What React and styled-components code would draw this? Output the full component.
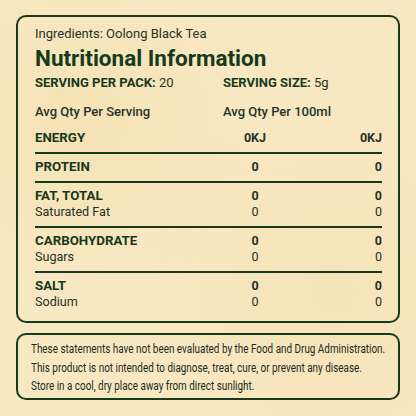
import styled, { createGlobalStyle } from "styled-components";

const GlobalStyle = createGlobalStyle`
  * { box-sizing: border-box; margin: 0; padding: 0; }
  body {
    margin: 0;
    background: #f8e8c2;
    font-family: Roboto, "Liberation Sans", sans-serif;
    color: #1c2a1d;
  }
`;

const GREEN = "#163a1c";

const rows = [
  { label: "ENERGY", per: "0KJ", per100: "0KJ" },
  { label: "PROTEIN", per: "0", per100: "0" },
  { label: "FAT, TOTAL", per: "0", per100: "0", sub: "Saturated Fat" },
  { label: "CARBOHYDRATE", per: "0", per100: "0", sub: "Sugars" },
  { label: "SALT", per: "0", per100: "0", sub: "Sodium" },
];

const notes = [
  "These statements have not been evaluated by the Food and Drug Administration.",
  "This product is not intended to diagnose, treat, cure, or prevent any disease.",
  "Store in a cool, dry place away from direct sunlight.",
];

const App = () => {
  return (
    <Page>
      <GlobalStyle />
      <Panel>
        <Ingredients>Ingredients: Oolong Black Tea</Ingredients>
        <Title>Nutritional Information</Title>
        <ServingRow>
          <Strong>
            SERVING PER PACK: <span>20</span>
          </Strong>
          <Wide>
            <Strong>
              SERVING SIZE: <span>5g</span>
            </Strong>
          </Wide>
        </ServingRow>
        <HeadRow>
          <Medium>Avg Qty Per Serving</Medium>
          <Wide>
            <Medium>Avg Qty Per 100ml</Medium>
          </Wide>
        </HeadRow>
        {rows.map((r, i) => (
          <Section key={r.label} $last={i === rows.length - 1}>
            <Label>{r.label}</Label>
            <Value>{r.per}</Value>
            <Value $right>{r.per100}</Value>
            {r.sub && (
              <>
                <Sub>{r.sub}</Sub>
                <SubValue>0</SubValue>
                <SubValue $right>0</SubValue>
              </>
            )}
          </Section>
        ))}
      </Panel>
      <Notice>
        {notes.map((n) => (
          <NoteLine key={n}>
            <span>{n}</span>
          </NoteLine>
        ))}
      </Notice>
    </Page>
  );
};

export default App;

const Page = styled.div`
  width: 416px;
  height: 416px;
  overflow: hidden;
  padding: 15px 16px 0;
  display: flex;
  flex-direction: column;
  gap: 10px;
  background:
    radial-gradient(circle at 20% 30%, rgba(240, 214, 160, 0.35), transparent 40%),
    radial-gradient(circle at 80% 70%, rgba(240, 214, 160, 0.3), transparent 45%),
    #f8e8c2;
`;

const Panel = styled.section`
  border: 2px solid ${GREEN};
  border-radius: 10px;
  height: 308px;
  flex-shrink: 0;
  padding: 9px 16px 0 17px;
`;

const Ingredients = styled.div`
  font-size: 13px;
  line-height: 16px;
  color: #25332a;
`;

const Title = styled.h1`
  font-size: 22.5px;
  font-weight: 700;
  line-height: 26px;
  color: ${GREEN};
  margin-top: 3px;
`;

const Grid = styled.div`
  display: grid;
  grid-template-columns: 188px 64px 1fr;
  align-items: center;
`;

const ServingRow = styled(Grid)`
  margin-top: 4px;
`;

const HeadRow = styled(Grid)`
  margin-top: 13px;
  padding-bottom: 5px;
`;

const Wide = styled.div`
  grid-column: 2 / 4;
`;

const Strong = styled.div`
  font-size: 13px;
  font-weight: 700;
  line-height: 16px;
  color: ${GREEN};

  span {
    font-weight: 400;
    color: #25332a;
  }
`;

const Medium = styled.div`
  font-size: 13px;
  font-weight: 500;
  line-height: 16px;
  color: #25332a;
`;

const Section = styled(Grid)`
  padding: 5px 0 6px;
  border-bottom: ${(p) => (p.$last ? "none" : `2px solid ${GREEN}`)};
  line-height: 16px;
`;

const Label = styled.div`
  font-size: 13.3px;
  font-weight: 700;
  color: ${GREEN};
`;

const Value = styled.div`
  font-size: 12.5px;
  font-weight: 700;
  color: #25332a;
  text-align: ${(p) => (p.$right ? "right" : "center")};
`;

const Sub = styled.div`
  font-size: 12.6px;
  color: #25332a;
`;

const SubValue = styled(Value)`
  font-weight: 400;
`;

const Notice = styled.section`
  border: 2px solid ${GREEN};
  border-radius: 10px;
  height: 67px;
  flex-shrink: 0;
  overflow: hidden;
  padding: 5px 10px 0 13px;
  font-size: 12px;
  line-height: 18.5px;
  color: #1c2a1d;
`;

const NoteLine = styled.p`
  white-space: nowrap;

  span {
    display: inline-block;
    transform: scaleX(0.825);
    transform-origin: left center;
  }
`;
